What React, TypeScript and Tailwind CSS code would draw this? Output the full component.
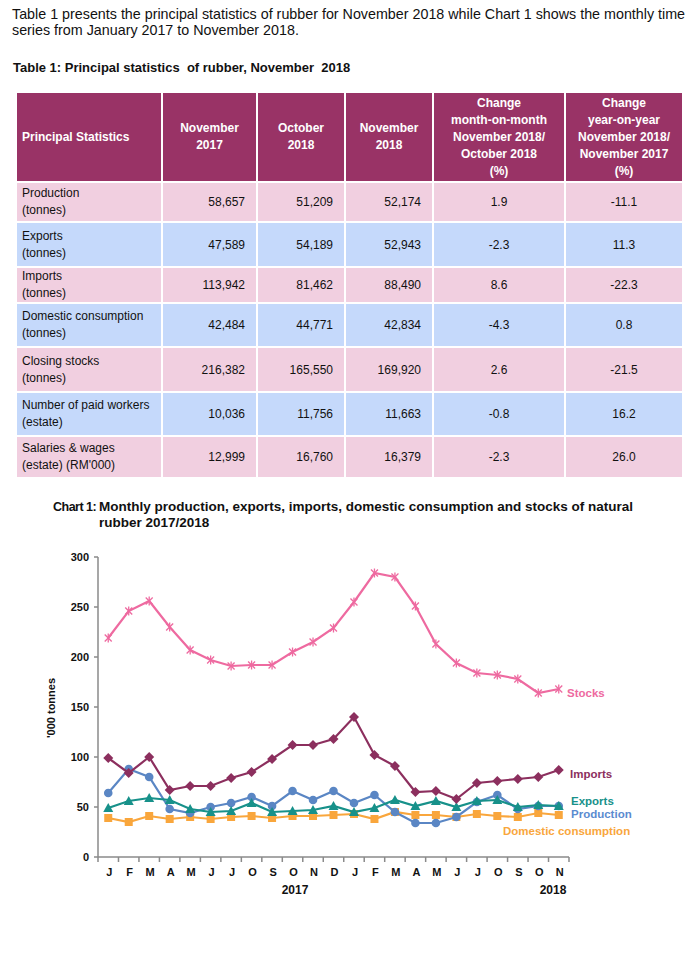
import React from 'react';

const FONT = { fontFamily: '"Liberation Sans", Arial, sans-serif' };

const columns = ['144px', '93px', '86px', '86px', '130px', '116px'];

const rows = [
    { label: ['Production', '(tonnes)'], values: ['58,657', '51,209', '52,174', '1.9', '-11.1'], tone: 'pink', h: 'h-[38px]' },
    { label: ['Exports', '(tonnes)'], values: ['47,589', '54,189', '52,943', '-2.3', '11.3'], tone: 'blue', h: 'h-[43px]' },
    { label: ['Imports', '(tonnes)'], values: ['113,942', '81,462', '88,490', '8.6', '-22.3'], tone: 'pink', h: 'h-[34px]' },
    { label: ['Domestic consumption', '(tonnes)'], values: ['42,484', '44,771', '42,834', '-4.3', '0.8'], tone: 'blue', h: 'h-[42px]' },
    { label: ['Closing stocks', '(tonnes)'], values: ['216,382', '165,550', '169,920', '2.6', '-21.5'], tone: 'pink', h: 'h-[43px]' },
    { label: ['Number of paid workers', '(estate)'], values: ['10,036', '11,756', '11,663', '-0.8', '16.2'], tone: 'blue', h: 'h-[42px]' },
    { label: ['Salaries & wages', '(estate) (RM\'000)'], values: ['12,999', '16,760', '16,379', '-2.3', '26.0'], tone: 'pink', h: 'h-[40px]' },
];

const months = ['J', 'F', 'M', 'A', 'M', 'J', 'J', 'O', 'S', 'O', 'N', 'D', 'J', 'F', 'M', 'A', 'M', 'J', 'J', 'O', 'S', 'O', 'N'];

const series = {
    stocks: [219, 246, 256, 230, 207, 197, 191, 192, 192, 205, 215, 229, 255, 284, 280, 251, 213, 194, 184, 182, 178, 164, 168],
    imports: [99, 84, 100, 67, 71, 71, 79, 85, 98, 112, 112, 118, 140, 102, 91, 65, 66, 58, 74, 76, 78, 80, 87],
    production: [64, 88, 80, 48, 44, 50, 54, 60, 51, 66, 57, 66, 54, 62, 45, 34, 34, 40, 55, 62, 48, 51, 51],
    exports: [49, 56, 59, 57, 48, 45, 46, 54, 45, 46, 47, 51, 45, 49, 57, 51, 56, 50, 56, 57, 50, 52, 51],
    domestic: [39, 35, 41, 38, 40, 38, 40, 41, 39, 41, 41, 42, 43, 38, 45, 42, 42, 40, 43, 41, 40, 44, 42],
};

// chart geometry in page coordinates (svg is shifted by its top offset)
const X0 = 98;
const X1 = 569;
const STEP = (X1 - X0) / 23;
const cx = (i: number) => X0 + STEP * (i + 0.5);
const cy = (v: number) => 858 - v;

function linePoints(data: number[]) {
    return data.map((v, i) => `${cx(i).toFixed(1)},${cy(v)}`).join(' ');
}

function Chart() {
    const top = 532;
    return (
        <svg width="694" height="420" viewBox={`0 ${top} 694 420`} style={FONT}>
            {/* axes */}
            <line x1={X0} y1={558} x2={X0} y2={858} stroke="#8a8a8a" strokeWidth="1.5" />
            <line x1={X0} y1={858} x2={X1} y2={858} stroke="#8a8a8a" strokeWidth="1.5" />
            {[0, 50, 100, 150, 200, 250, 300].map((v) => (
                <g key={v}>
                    <line x1={X0 - 4} y1={cy(v)} x2={X0} y2={cy(v)} stroke="#8a8a8a" strokeWidth="1.5" />
                    <text x={89} y={cy(v) + 4} textAnchor="end" fontSize="11" fontWeight="bold" fill="#111">
                        {v}
                    </text>
                </g>
            ))}
            {Array.from({ length: 24 }).map((_, i) => (
                <line key={i} x1={X0 + STEP * i} y1={858} x2={X0 + STEP * i} y2={863} stroke="#8a8a8a" strokeWidth="1.5" />
            ))}
            {months.map((m, i) => (
                <text key={i} x={cx(i) + 1} y={877} textAnchor="middle" fontSize="11" fontWeight="bold" fill="#111">
                    {m}
                </text>
            ))}
            <text x={295} y={895} textAnchor="middle" fontSize="12" fontWeight="bold" fill="#111">2017</text>
            <text x={553} y={895} textAnchor="middle" fontSize="12" fontWeight="bold" fill="#111">2018</text>
            <text
                x={0}
                y={0}
                transform="translate(55 709) rotate(-90)"
                textAnchor="middle"
                fontSize="11"
                fontWeight="bold"
                fill="#111"
            >
                '000 tonnes
            </text>

            {/* domestic consumption */}
            <polyline points={linePoints(series.domestic)} fill="none" stroke="#f9a63c" strokeWidth="2.2" />
            {series.domestic.map((v, i) => (
                <rect key={i} x={cx(i) - 4} y={cy(v) - 4} width="8" height="8" fill="#f9a63c" />
            ))}

            {/* production */}
            <polyline points={linePoints(series.production)} fill="none" stroke="#5a86c4" strokeWidth="2.2" />
            {series.production.map((v, i) => (
                <circle key={i} cx={cx(i)} cy={cy(v)} r="4.3" fill="#5a86c4" />
            ))}

            {/* exports */}
            <polyline points={linePoints(series.exports)} fill="none" stroke="#17918a" strokeWidth="2.2" />
            {series.exports.map((v, i) => (
                <polygon
                    key={i}
                    points={`${cx(i)},${cy(v) - 5} ${cx(i) - 5},${cy(v) + 4} ${cx(i) + 5},${cy(v) + 4}`}
                    fill="#17918a"
                />
            ))}

            {/* imports */}
            <polyline points={linePoints(series.imports)} fill="none" stroke="#8c2f5e" strokeWidth="2.2" />
            {series.imports.map((v, i) => (
                <polygon
                    key={i}
                    points={`${cx(i)},${cy(v) - 5} ${cx(i) + 5},${cy(v)} ${cx(i)},${cy(v) + 5} ${cx(i) - 5},${cy(v)}`}
                    fill="#8c2f5e"
                />
            ))}

            {/* stocks */}
            <polyline points={linePoints(series.stocks)} fill="none" stroke="#ee6aa0" strokeWidth="2.2" />
            {series.stocks.map((v, i) => {
                const x = cx(i);
                const y = cy(v);
                return (
                    <g key={i} stroke="#ee6aa0" strokeWidth="1.3">
                        <line x1={x - 3.5} y1={y - 3.5} x2={x + 3.5} y2={y + 3.5} />
                        <line x1={x - 3.5} y1={y + 3.5} x2={x + 3.5} y2={y - 3.5} />
                        <line x1={x} y1={y - 4.5} x2={x} y2={y + 4.5} />
                    </g>
                );
            })}

            {/* series labels */}
            <text x={567} y={698} fontSize="11.5" fontWeight="bold" fill="#ee6aa0">Stocks</text>
            <text x={570} y={779} fontSize="11.5" fontWeight="bold" fill="#8c2f5e">Imports</text>
            <text x={571} y={806} fontSize="11.5" fontWeight="bold" fill="#17918a">Exports</text>
            <text x={571} y={819} fontSize="11.5" fontWeight="bold" fill="#5b8bd0">Production</text>
            <text x={503} y={836} fontSize="11.5" fontWeight="bold" fill="#f9a63c">Domestic consumption</text>
        </svg>
    );
}

export default function App() {
    return (
        <div className="w-[694px] h-[978px] bg-white text-[#111] overflow-hidden" style={FONT}>
            <p className="pt-[6px] pl-[12px] text-[14.3px] leading-[16px] whitespace-nowrap">
                Table 1 presents the principal statistics of rubber for November 2018 while Chart 1 shows the monthly time
                <br />
                series from January 2017 to November 2018.
            </p>

            <h2 className="mt-[22px] ml-[13px] text-[13px] leading-[16px] font-bold whitespace-pre">
                {'Table 1: Principal statistics  of rubber, November  2018'}
            </h2>

            {/* Table 1 */}
            <div className="mt-[16px] ml-[16px] w-[665px] bg-white p-[1px] text-[12px]">
                <div className="grid gap-[2px]" style={{ gridTemplateColumns: columns.join(' ') }}>
                    <div className="h-[88px] bg-[#993366] text-white font-bold flex items-center pl-[5px]">
                        Principal Statistics
                    </div>
                    <div className="bg-[#993366] text-white font-bold flex items-center justify-center text-center leading-[17px]">
                        November
                        <br />
                        2017
                    </div>
                    <div className="bg-[#993366] text-white font-bold flex items-center justify-center text-center leading-[17px]">
                        October
                        <br />
                        2018
                    </div>
                    <div className="bg-[#993366] text-white font-bold flex items-center justify-center text-center leading-[17px]">
                        November
                        <br />
                        2018
                    </div>
                    <div className="bg-[#993366] text-white font-bold flex items-center justify-center text-center leading-[17px]">
                        <div>
                            Change
                            <br />
                            month-on-month
                            <br />
                            November 2018/
                            <br />
                            October 2018
                            <br />
                            (%)
                        </div>
                    </div>
                    <div className="bg-[#993366] text-white font-bold flex items-center justify-center text-center leading-[17px]">
                        <div>
                            Change
                            <br />
                            year-on-year
                            <br />
                            November 2018/
                            <br />
                            November 2017
                            <br />
                            (%)
                        </div>
                    </div>

                    {rows.map((row) => {
                        const bg = row.tone === 'pink' ? 'bg-[#f1cfe0]' : 'bg-[#c5d9fb]';
                        return (
                            <React.Fragment key={row.label[0]}>
                                <div className={`${bg} ${row.h} flex flex-col justify-center pl-[5px] leading-[17px]`}>
                                    <span>{row.label[0]}</span>
                                    <span>{row.label[1]}</span>
                                </div>
                                {row.values.slice(0, 3).map((v, i) => (
                                    <div key={i} className={`${bg} flex items-center justify-end pr-[11px]`}>
                                        {v}
                                    </div>
                                ))}
                                {row.values.slice(3).map((v, i) => (
                                    <div key={i} className={`${bg} flex items-center justify-center`}>
                                        {v}
                                    </div>
                                ))}
                            </React.Fragment>
                        );
                    })}
                </div>
            </div>

            {/* Chart 1 */}
            <div className="mt-[21px] ml-[53px] flex text-[13.5px] leading-[16px] font-bold">
                <span className="w-[46px] shrink-0 whitespace-nowrap text-[12.5px] tracking-[-0.5px]">Chart 1:</span>
                <span className="w-[545px]">
                    Monthly production, exports, imports, domestic consumption and stocks of natural rubber 2017/2018
                </span>
            </div>

            <Chart />
        </div>
    );
}
